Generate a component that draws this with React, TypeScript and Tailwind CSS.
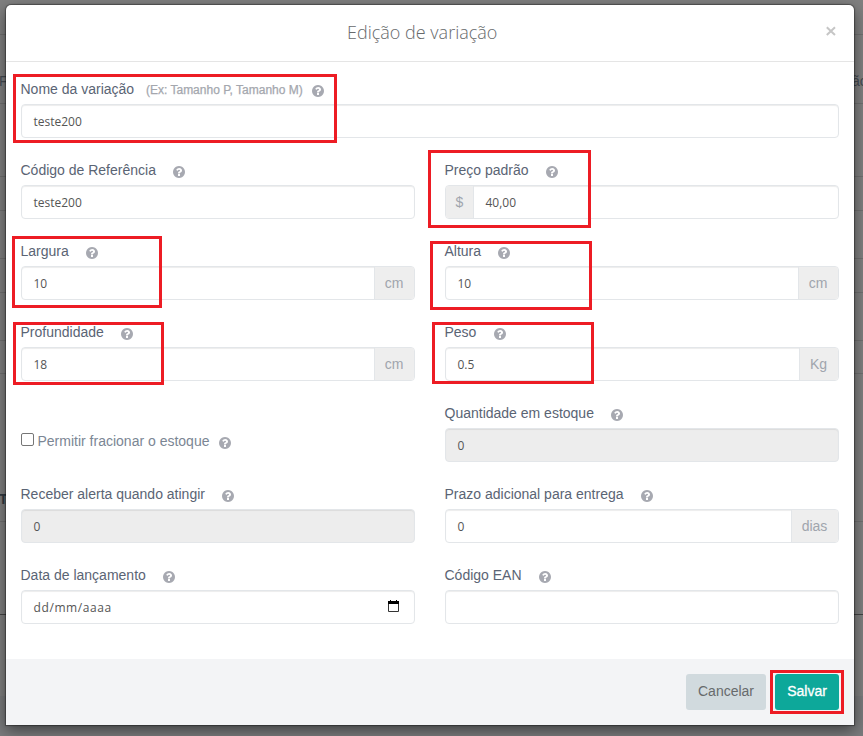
import type { ReactNode } from "react";

const backdropLines = [34, 103, 176, 210, 258, 292, 340, 373, 521];

const highlights = [
  "left-[13px] top-[74px] w-[324px] h-[69px]",
  "left-[428px] top-[150px] w-[163px] h-[78px]",
  "left-[12px] top-[236px] w-[150px] h-[72px]",
  "left-[430px] top-[241px] w-[162px] h-[69px]",
  "left-[13px] top-[322px] w-[151px] h-[63px]",
  "left-[432px] top-[322px] w-[162px] h-[62px]",
  "left-[770px] top-[670px] w-[74px] h-[44px]",
];

function HelpIcon({ className = "" }: { className?: string }) {
  return (
    <svg className={`block shrink-0 ${className}`} width="12" height="12" viewBox="0 0 1536 1536" fill="#a7a9b1">
      <path d="M896 1248v-192q0-14-9-23t-23-9H672q-14 0-23 9t-9 23v192q0 14 9 23t23 9h192q14 0 23-9t9-23zm256-672q0-88-55.500-163T958 297t-170-41q-243 0-371 213-15 24 8 42l132 100q7 6 19 6 16 0 25-12 53-68 86-92 34-24 86-24 48 0 85.500 26t37.500 59q0 38-20 61t-68 45q-63 28-115.500 86.500T640 892v36q0 14 9 23t23 9h192q14 0 23-9t9-23q0-19 21.500-49.500T972 829q32-18 49-28.500t46-35 44.500-48 28-60.500 12.500-81zm384 192q0 209-103 385.500T1153.500 1433 768 1536t-385.500-103T103 1153.500 0 768t103-385.500T382.500 103 768 0t385.500 103T1433 382.500 1536 768z" />
    </svg>
  );
}

function Label({ text, width, hint }: { text: string; width: string; hint?: string }) {
  return (
    <div className="mb-1 flex h-[22px] items-center text-[14px] leading-[22px] text-[#5a6474]">
      <span className={`-ml-[0.5px] mr-[0.5px] whitespace-nowrap ${width}`}>{text}</span>
      {hint && <span className="ml-3 w-[158px] whitespace-nowrap pt-px text-[12px] text-[#a4a7ae] [-webkit-text-stroke:0.25px_#a4a7ae]">{hint}</span>}
      <HelpIcon className={hint ? "mt-1 ml-2" : "mt-1 ml-4"} />
    </div>
  );
}

function Field(props: {
  label: string;
  width: string;
  value?: string;
  hint?: string;
  prefix?: string;
  suffix?: string;
  suffixWidth?: string;
  disabled?: boolean;
  valueClass?: string;
  children?: ReactNode;
}) {
  const { label, width, value, hint, prefix, suffix, suffixWidth = "w-[41px]", disabled, valueClass = "", children } = props;
  return (
    <div className="mb-[21px]">
      <Label text={label} width={width} hint={hint} />
      <div className={`flex h-[34px] overflow-hidden rounded-[4px] border border-[#e3e6e9] shadow-[inset_0_1px_1px_rgba(0,0,0,0.075)] ${disabled ? "bg-[#ededed]" : "bg-white"}`}>
        {prefix && <span className="flex w-[28px] items-center justify-center border-r border-[#e3e6e9] bg-[#eeeeee] text-[14px] text-[#a0a5ad]">{prefix}</span>}
        <span className={`flex flex-1 items-center pr-3 pl-[11.500px] pt-px font-['Open_Sans','Noto_Sans',sans-serif] text-[12px] text-[#555555] ${valueClass}`}>{value}</span>
        {children}
        {suffix && <span className={`-mr-px flex items-center justify-center border-l border-[#e3e6e9] bg-[#eeeeee] pr-[2px] text-[14px] text-[#a0a5ad] ${suffixWidth}`}>{suffix}</span>}
      </div>
    </div>
  );
}

export default function App() {
  return (
    <div className="relative h-[736px] w-[863px] overflow-hidden bg-[#808080] px-[6px] pt-[5px] font-['Liberation_Sans',Arial,sans-serif]">
      {backdropLines.map((y) => (
        <div key={y} className="absolute left-0 h-px w-full bg-[#707070]" style={{ top: y }} />
      ))}
      <div className="absolute top-[494px] left-0 h-px w-[20px] bg-[#444444]" />
      <div className="absolute top-[614px] left-0 h-px w-full bg-[#444444]" />
      <div className="absolute top-[696px] left-0 h-[40px] w-full bg-[#7a7b7d]" />
      <span className="absolute top-[71px] left-[-1px] text-[14px] leading-[20px] text-[#454b52]">F</span>
      <span className="absolute top-[489px] left-[-1px] text-[14px] leading-[20px] font-bold text-[#323a42]">T</span>
      <span className="absolute top-[71px] left-[852px] text-[14px] leading-[20px] text-[#454b52]">ão</span>

      <div className="relative flex h-[720px] w-[848px] flex-col rounded-t-[5px] bg-white shadow-[0_0_1px_1px_rgba(0,0,0,0.35),0_5px_15px_rgba(0,0,0,0.5)]">
        <header className="relative flex h-[57px] shrink-0 items-center justify-center border-b border-[#e5e5e5]">
          <h1 className="-mt-px mr-4 w-[150px] whitespace-nowrap font-['Open_Sans','Noto_Sans',sans-serif] text-[18px] font-light text-[#676a6c]">Edição de variação</h1>
          <svg className="absolute top-[21px] right-[18px]" width="10" height="10" viewBox="0 0 10 10" stroke="#c6c6c6" strokeWidth="2">
            <path d="M.8 1.200 9 9M9 1.200.8 9" />
          </svg>
        </header>

        <main className="flex-1 px-[15px] pt-4">
          <Field label="Nome da variação" width="w-[113px]" hint="(Ex: Tamanho P, Tamanho M)" value="teste200" />
          <div className="grid grid-cols-2 gap-x-[30px]">
            <Field label="Código de Referência" width="w-[136px]" value="teste200" />
            <Field label="Preço padrão" width="w-[84.500px]" prefix="$" value="40,00" />
            <Field label="Largura" width="w-[49px]" value="10" suffix="cm" />
            <Field label="Altura" width="w-[37px]" value="10" suffix="cm" />
            <Field label="Profundidade" width="w-[84px]" value="18" suffix="cm" />
            <Field label="Peso" width="w-[32.500px]" value="0.5" suffix="Kg" suffixWidth="w-[40px]" />
            <div className="flex h-[81px] items-start pt-[27px] text-[14px] leading-[22px] text-[#7b8694]">
              <span className="mt-1 h-[13px] w-[13px] rounded-[2px] border border-[#767676] bg-white" />
              <span className="ml-[3.500px] w-[172px] whitespace-nowrap pt-px">Permitir fracionar o estoque</span>
              <HelpIcon className="mt-2 ml-[9px]" />
            </div>
            <Field label="Quantidade em estoque" width="w-[150px]" value="0" disabled />
            <Field label="Receber alerta quando atingir" width="w-[185px]" value="0" disabled />
            <Field label="Prazo adicional para entrega" width="w-[179.500px]" value="0" suffix="dias" suffixWidth="w-[48px]" />
            <Field label="Data de lançamento" width="w-[126px]" value="dd/mm/aaaa" valueClass="tracking-[0.6px]">
              <svg className="mt-[9px] mr-[15px]" width="11" height="12" viewBox="0 0 11 12">
                <path d="M0 1h2V0h1v1h5V0h1v1h2v3H0z" fill="#000000" />
                <path d="M.5 4v7.500h10V4" fill="none" stroke="#333333" />
              </svg>
            </Field>
            <Field label="Código EAN" width="w-[77.500px]" />
          </div>
        </main>

        <footer className="flex h-[66px] shrink-0 items-start justify-end gap-[9px] bg-[#f3f4f6] px-[15px] pt-[15px] text-[14px]">
          <button className="h-9 w-[80px] rounded-[3px] bg-[#d1dade] pb-[2px] text-[#676a6c]">Cancelar</button>
          <button className="h-9 w-[64px] rounded-[3px] bg-[#0da89a] pb-[2px] text-white [-webkit-text-stroke:0.3px_white]">Salvar</button>
        </footer>
      </div>

      {highlights.map((box) => (
        <div key={box} className={`pointer-events-none absolute border-[3px] border-[#ed1c24] ${box}`} />
      ))}
    </div>
  );
}
